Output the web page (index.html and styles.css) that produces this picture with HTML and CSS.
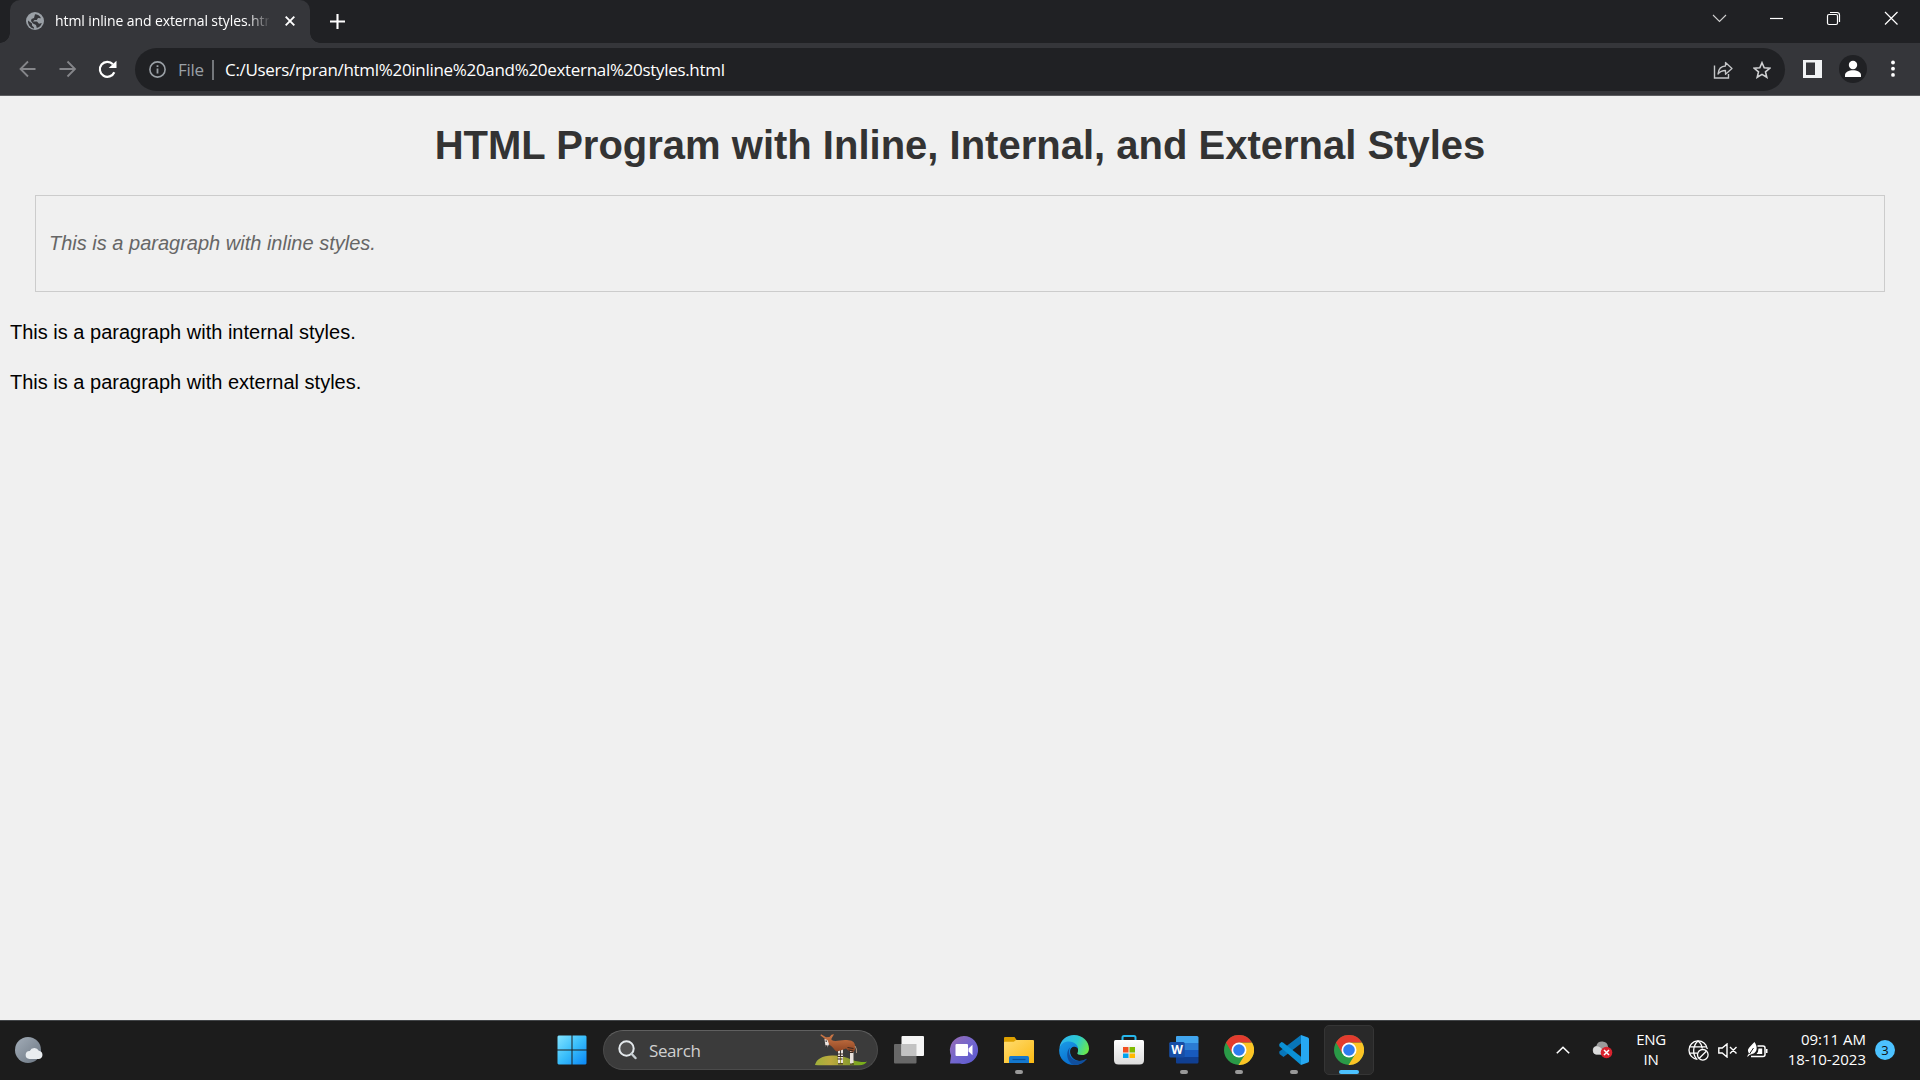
FILE: index.html
```html
<!DOCTYPE html>
<html lang="en">
<head>
<meta charset="utf-8">
<title>html inline and external styles.html</title>
<link rel="stylesheet" href="styles.css">
</head>
<body>
<svg class="defs" aria-hidden="true">
  <defs>
    <linearGradient id="win" x1="0" y1="0" x2="1" y2="1"><stop offset="0" stop-color="#83e4ff"/><stop offset=".5" stop-color="#38bdfb"/><stop offset="1" stop-color="#0a86f5"/></linearGradient>
    <linearGradient id="moon" x1="0" y1="0" x2="1" y2="1"><stop offset="0" stop-color="#a3adb8"/><stop offset="1" stop-color="#6b7682"/></linearGradient>
    <linearGradient id="chat" x1="0" y1="0" x2="1" y2="1"><stop offset="0" stop-color="#9a6bb0"/><stop offset=".5" stop-color="#7367ce"/><stop offset="1" stop-color="#5a57cf"/></linearGradient>
    <linearGradient id="folder" x1="0" y1="0" x2="1" y2="1"><stop offset="0" stop-color="#ffdc70"/><stop offset="1" stop-color="#fbb912"/></linearGradient>
    <linearGradient id="edgeTop" x1="0" y1=".3" x2="1" y2=".6"><stop offset="0" stop-color="#2fb4f0"/><stop offset=".55" stop-color="#2cc9d0"/><stop offset="1" stop-color="#6be84a"/></linearGradient>
    <linearGradient id="edgeLow" x1="0" y1="0" x2=".6" y2="1"><stop offset="0" stop-color="#1b9ce6"/><stop offset="1" stop-color="#0669cc"/></linearGradient>
    <linearGradient id="hill" x1="0" y1="0" x2="1" y2="0"><stop offset="0" stop-color="#9fb03a"/><stop offset=".3" stop-color="#bda93e"/><stop offset=".65" stop-color="#8c9c2f"/><stop offset="1" stop-color="#74b414"/></linearGradient>
    <linearGradient id="coat" x1="0" y1="0" x2="0" y2="1"><stop offset="0" stop-color="#cf7a48"/><stop offset="1" stop-color="#8c4322"/></linearGradient>
    <linearGradient id="bag" x1="0" y1="0" x2="0" y2="1"><stop offset="0" stop-color="#fff"/><stop offset="1" stop-color="#dcdcdc"/></linearGradient>
    <symbol id="chrome" viewBox="0 0 30 30">
      <circle cx="15" cy="15" r="15" fill="#2a9a47"/>
      <path d="M15 7.500H28A15 15 0 0 1 14.500 30L21.500 18.750Z" fill="#fcc425"/>
      <path d="M2 7.500A15 15 0 0 1 28 7.500H15L8.500 18.750Z" fill="#e33b2e"/>
      <circle cx="15" cy="15" r="7.500" fill="#fff"/>
      <circle cx="15" cy="15" r="5.800" fill="#2f7df0"/>
    </symbol>
  </defs>
</svg>

<header class="browser">
  <div class="tabstrip">
    <div class="tab">
      <svg class="favicon" viewBox="0 0 18 18"><circle cx="9" cy="9" r="9" fill="#9aa0a6"/><path d="M2 8.500l4 3v2l2 2v1.200A7.200 7.200 0 0 1 2 8.500zM9 2.200c2.500 0 5 1.500 6 4l-3-.2-1.200 2H8.500L7 9.500h4l2 2.200 2.800-.7a7 7 0 0 1-5 5L10 13l-3-1.500L5 9l.5-2L8 6z" fill="#35363a"/></svg>
      <span class="tab-title">html inline and external styles.html</span>
      <svg class="tab-close" viewBox="0 0 10 10"><path d="M.7.7l8.600 8.600M9.300.7L.7 9.300" stroke="#fff" stroke-width="1.900"/></svg>
    </div>
    <svg class="new-tab" viewBox="0 0 15 15"><path d="M7.500 0v15M0 7.500h15" stroke="#fff" stroke-width="2.100"/></svg>
    <div class="window-buttons">
      <svg viewBox="0 0 57 38"><path d="M22 15l6.500 6.500L35 15" fill="none" stroke="#d0d0d0" stroke-width="1.100"/></svg>
      <svg viewBox="0 0 57 38"><path d="M22 18.500h13" stroke="#fff" stroke-width="1.200"/></svg>
      <svg viewBox="0 0 57 38"><rect x="22.500" y="14.500" width="10" height="10" rx="1.500" fill="none" stroke="#fff" stroke-width="1.200"/><path d="M25 12.500h7q2.500 0 2.500 2.500v7" fill="none" stroke="#fff" stroke-width="1.200"/></svg>
      <svg viewBox="0 0 57 38"><path d="M23 12l12.500 12.500M35.500 12L23 24.500" stroke="#fff" stroke-width="1.200"/></svg>
    </div>
  </div>

  <div class="toolbar">
    <svg class="nav" viewBox="0 0 40 40"><path d="M35.500 20H21M28 12.500L20.500 20l7.500 7.500" fill="none" stroke="#85868a" stroke-width="1.800"/></svg>
    <svg class="nav" viewBox="0 0 40 40"><path d="M19.500 20H34M27.500 12.500L35 20l-7.500 7.500" fill="none" stroke="#85868a" stroke-width="1.800"/></svg>
    <svg class="nav" viewBox="0 0 40 40"><path d="M34.300 23.200A7.500 7.500 0 1 1 32.900 15.200" fill="none" stroke="#fff" stroke-width="2.200"/><path d="M36.500 11.700V19h-7.800z" fill="#fff"/></svg>
    <div class="omnibox">
      <svg class="info" viewBox="0 0 17 17"><circle cx="8.500" cy="8.500" r="7.600" fill="none" stroke="#9aa0a6" stroke-width="1.600"/><path d="M8.500 7.500v5M8.500 4.200v1.900" stroke="#9aa0a6" stroke-width="1.800"/></svg>
      <span class="scheme">File</span>
      <span class="divider"></span>
      <span class="url">C:/Users/rpran/html%20inline%20and%20external%20styles.html</span>
      <svg class="share" viewBox="0 0 20 18"><path d="M1.500 4.500V17h14v-4" fill="none" stroke="#c4c5c7" stroke-width="1.400"/><path d="M5 13C5.500 8 8 5.200 12.500 5V1.500L19 7.500l-6.500 5.700V9.500C9 9.500 7 10.500 5 13z" fill="none" stroke="#c4c5c7" stroke-width="1.300" stroke-linejoin="round"/></svg>
      <svg class="star" viewBox="0 0 18 18"><path d="M9 1.700l2.200 5.100 5.500.5-4.200 3.600 1.300 5.400L9 13.400l-4.800 2.900 1.300-5.400-4.200-3.600 5.500-.5z" fill="none" stroke="#d0d1d3" stroke-width="1.600"/></svg>
    </div>
    <svg class="panel" viewBox="0 0 19 18"><path fill-rule="evenodd" d="M0 0h19v18H0zM3 2.500v12.500h9V2.500z" fill="#f1f3f4"/></svg>
    <svg class="profile" viewBox="0 0 28 28"><circle cx="14" cy="14" r="14" fill="#202124"/><circle cx="14" cy="10" r="4.200" fill="#fff"/><path d="M6 22v-2c0-3 4-4.800 8-4.800s8 1.800 8 4.800v2z" fill="#fff"/></svg>
    <svg class="kebab" viewBox="0 0 4 18"><circle cx="2" cy="2.500" r="1.900" fill="#fff"/><circle cx="2" cy="8.700" r="1.900" fill="#fff"/><circle cx="2" cy="14.900" r="1.900" fill="#fff"/></svg>
  </div>
</header>

<main class="page">
  <h1>HTML Program with Inline, Internal, and External Styles</h1>
  <div class="box"><p class="inline-text">This is a paragraph with inline styles.</p></div>
  <p>This is a paragraph with internal styles.</p>
  <p>This is a paragraph with external styles.</p>
</main>

<footer class="taskbar">
  <svg class="weather" viewBox="0 0 30 30"><circle cx="14" cy="14" r="13" fill="url(#moon)"/><path d="M15.500 23a4 4 0 0 1 .3-8 5 5 0 0 1 9-.3A4.200 4.200 0 0 1 25 23z" fill="#e9edf0"/></svg>
  <div class="apps">
    <div class="app"><svg viewBox="0 0 30 30"><path d="M1.500.5h13v14H.5v-13zM15.500.5h13l1 1v13h-14zM.5 15.500h14v14h-13l-1-1zM15.500 15.500h14v13l-1 1h-13z" fill="url(#win)"/></svg></div>
    <div class="search">
      <svg class="glass" viewBox="0 0 19 20"><circle cx="8.500" cy="8.500" r="7.200" fill="#505050" stroke="#e4e9ec" stroke-width="2"/><path d="M13.500 13.700l4 4.300" stroke="#c6cdd1" stroke-width="2.400" stroke-linecap="round"/></svg>
      <span>Search</span>
      <svg class="okapi" viewBox="0 0 54 34">
        <path d="M1 32Q3 23 18 22.500Q29 22 38 27Q49 30 53 28.500Q51 32 45 32.300H4Z" fill="url(#hill)"/>
        <path d="M25 16v14.500M28 16v14M37 15v16M38.500 16v14" stroke="#e9e2dc" stroke-width="2"/>
        <path d="M10.500 5.500L6.500 2.500 7 1.300 12 4.300 15.500 4 17.500 1.800 20 1.200 17.500 5.500 17.500 7C21 9 26 7 31 7c5 0 9 .5 10 5 .5 3 .2 5-1.500 7L35 18l-3-2.500-4 1.500-5 1.500C20.500 18 19.500 14 15.500 12l-3-1z" fill="url(#coat)"/>
        <path d="M10.500 6l3 1 1.500 4-1.500 3.200-2-.7z" fill="#ece5e1"/><path d="M11.300 12l2.700.7-1 1.800-1.500-.3zM11.500 7.500h1.500v1.200h-1.500z" fill="#363030"/>
        <path d="M41 13q2 2.500 1.500 7" stroke="#b9a08a" stroke-width=".9" fill="none"/>
        <path d="M23.500 21h5.500M23.500 23.500h5.500M23.500 26h5M24 30.800h5M33.500 14.500l6 1M34.500 17l5 1M35.500 19.500h4M36 31h4" stroke="#38261d" stroke-width="1"/>
      </svg>
    </div>
    <div class="app"><svg viewBox="0 0 30 30"><rect y="9" width="22.500" height="19.500" rx="1" fill="#686868"/><rect x="7.500" y="1" width="22.500" height="20" rx="1" fill="#f5f5f5"/><path d="M7.500 9h15v12h-15z" fill="#c2c2c2"/></svg></div>
    <div class="app"><svg viewBox="0 0 30 30"><path d="M15 1a14 14 0 1 1-4 27.400L1 28.500l1-8A14 14 0 0 1 15 1z" fill="url(#chat)"/><rect x="6.500" y="9" width="12.500" height="12" rx="1" fill="#fff"/><path d="M19.500 13.500l4-3.800v10.600l-4-3.800z" fill="#fff"/></svg></div>
    <div class="app running"><svg viewBox="0 0 30 30"><path d="M0 3q0-1 1-1h9.500l2.500 3.500V10H0z" fill="#dda000"/><path d="M0 7.500q0-.8.800-.8h9L12 5h17q1 0 1 1v22H0z" fill="url(#folder)"/><path d="M5 28v-5.500q0-1.500 1.500-1.500h17q1.500 0 1.500 1.500V28z" fill="#1478ce"/><path d="M8.500 24.500h13" stroke="#08519b" stroke-width="1.200"/></svg></div>
    <div class="app"><svg viewBox="0 0 30 30"><path d="M.5 12.500C1.500 5 7.500 0 15 0c9 0 15 6.500 15 13.500 0 4.500-3.500 7-7.500 6.500-3 0-4.300-1-4.300-2 0-.7 1-1.500.8-3.500C18.500 10 12 6 .5 12.500z" fill="url(#edgeTop)"/><path d="M.2 14.500C1 9 5 6.500 10 6.500c6 0 9.500 4.500 9 8-1-3-7-4.500-7.500 2C11 22 16 26 21 26q3 0 6-1.800C24 28 20 30 15 30 6 30-.5 23 .2 14.500z" fill="url(#edgeLow)"/><path d="M11 12.500c-3 6 1 13 8.500 13.500q4 .2 7.500-2 1.500-.8.5.5Q23 30 15.500 30C9 29 5.500 18 11 12.500z" fill="#104f9e"/><path d="M19 14.500c-1-4.500-8-3.500-7.800 2 .1 2 .8 3.800 2 5.300C13.500 18.500 15.500 19 18.500 18c-.5-1 .8-1.500.5-3.500z" fill="#1c1c1c"/></svg></div>
    <div class="app"><svg viewBox="0 0 30 30"><path d="M8.500 6V2.500q0-1.500 1.500-1.500h10q1.500 0 1.500 1.500V6" fill="none" stroke="#27b8ed" stroke-width="2"/><path d="M0 6.500q0-1.500 1.500-1.500h27q1.500 0 1.500 1.500V25q0 4.500-4.500 4.500h-21Q0 29.500 0 25z" fill="url(#bag)"/><path d="M9 12h5.500v5.500H9z" fill="#f15022"/><path d="M15.500 12H21v5.500h-5.500z" fill="#7fba00"/><path d="M9 18.500h5.500V23H9z" fill="#00a3ee"/><path d="M15.500 18.500H21V23h-5.500z" fill="#ffb901"/></svg></div>
    <div class="app running"><div class="word"><svg viewBox="0 0 30 30"><path d="M7 2q0-1 1-1h20q1.500 0 1.500 1.500V8H7z" fill="#41a5ee"/><path d="M7 8h22.500v7H7z" fill="#2b7cd3"/><path d="M7 15h22.500v7H7z" fill="#185abd"/><path d="M7 22h22.500v5q0 1.500-1.500 1.500H8q-1 0-1-1z" fill="#103f91"/><rect x=".2" y="7" width="15.500" height="15.500" rx="1.500" fill="#174ea6"/></svg><b>W</b></div></div>
    <div class="app running"><svg><use href="#chrome"/></svg></div>
    <div class="app running"><svg viewBox="0 0 30 30"><path d="M22 0L5 18.500 2.500 20.300.3 18.500v-2L22 0v8.500L4.500 22 .5 19z" fill="#0876b9"/><path d="M2.500 7L.3 9v2.300L22 30v-8.300L4 7.500z" fill="#0b91d5"/><path d="M22 0l7 2.500q1 .5 1 1.500v22q0 1-1 1.500L22 30z" fill="#26a8f2"/></svg></div>
    <div class="app running active"><svg><use href="#chrome"/></svg></div>
  </div>
  <div class="tray">
    <svg class="chevron" viewBox="0 0 14 8"><path d="M.8 7.300L7 1.300l6.200 6" fill="none" stroke="#fff" stroke-width="1.600"/></svg>
    <svg class="cloud" viewBox="0 0 21 18"><path d="M4.500 13.500a4.300 4.300 0 0 1-.2-8.500A6 6 0 0 1 16 5.500v8z" fill="#9b9b9b"/><path d="M4 13.500a4.300 4.300 0 0 1 .5-8.300q4 0 6 3.500v4.800z" fill="#dadada"/><circle cx="14.500" cy="11.500" r="5.800" fill="#d8232e"/><path d="M12 9l5 5M17 9l-5 5" stroke="#fff" stroke-width="1.500"/></svg>
    <div class="language">ENG<br>IN</div>
    <svg class="globe" viewBox="0 0 21 21"><g fill="none" stroke="#fff" stroke-width="1.300"><path d="M9.500 19.300A9.200 9.200 0 1 1 19.300 9"/><path d="M8.500 19C4.500 14 4.500 6 10 1c3 2.200 4 5 4.200 7.500M1.500 6.800h17M1.500 13.200H9"/><circle cx="14.800" cy="14.800" r="5.300"/><path d="M11.300 18.300l7-7"/></g></svg>
    <svg class="speaker" viewBox="0 0 20 15"><path d="M.8 5v5h3.400L9 14V1L4.200 5zM12 4l6.500 6.500M18.500 4L12 10.500" fill="none" stroke="#fff" stroke-width="1.400"/></svg>
    <svg class="battery" viewBox="0 0 21 17"><path d="M10.500 4h5.500q2 0 2 2v6.500q0 2-2 2H4" fill="none" stroke="#fff" stroke-width="1.500"/><path d="M11.500 6.500h3.700v5.500H9.500q2-2 2-5.500z" fill="#fff"/><path d="M19 7h1.500v4H19z" fill="#fff"/><path d="M2 11.500C-1 7 3 5 7.500 0c3 4 3.500 10.500-2.500 12L2.500 13 1 14.500H0z" fill="#fff"/><path d="M2.500 12L6.500 6" stroke="#1c1c1c"/></svg>
    <div class="clock">09:11 AM<br>18-10-2023</div>
    <div class="badge">3</div>
  </div>
</footer>
</body>
</html>
```
FILE: styles.css
```css
* { box-sizing: border-box; }
body {
  margin: 0;
  width: 1920px;
  height: 1080px;
  display: flex;
  flex-direction: column;
  overflow: hidden;
  background: #f0f0f0;
  font-family: "Open Sans", "Noto Sans", sans-serif;
}
svg { display: block; flex: none; }
.defs { position: absolute; width: 0; height: 0; }

/* Browser frame */
.browser { flex: none; height: 96px; background: #35363a; border-bottom: 1px solid #5c5d60; }
.tabstrip { height: 43px; background: #202124; display: flex; padding-left: 10px; }
.tab {
  position: relative;
  width: 300px;
  height: 43px;
  display: flex;
  align-items: center;
  padding: 0 15px 1px 16px;
  background: #35363a;
  border-radius: 10px 10px 0 0;
}
.tab::before, .tab::after {
  content: "";
  position: absolute;
  bottom: 0;
  width: 10px;
  height: 10px;
}
.tab::before { left: -10px; background: radial-gradient(circle at 0 0, transparent 9.5px, #35363a 10px); }
.tab::after { right: -10px; background: radial-gradient(circle at 100% 0, transparent 9.5px, #35363a 10px); }
.favicon { width: 18px; height: 18px; }
.tab-title {
  width: 214px;
  margin-left: 11px;
  padding-bottom: 1px;
  overflow: hidden;
  white-space: nowrap;
  color: #fff;
  font-size: 14px;
  letter-spacing: -.1px;
  -webkit-mask-image: linear-gradient(90deg, #000 192px, transparent 216px);
  mask-image: linear-gradient(90deg, #000 192px, transparent 216px);
}
.tab-close { width: 10px; height: 10px; margin-left: auto; }
.new-tab { width: 15px; height: 15px; margin: 14px 0 0 20px; }
.window-buttons { display: flex; margin-left: auto; padding-right: 1px; }
.window-buttons svg { width: 57px; height: 38px; }

.toolbar { height: 52px; display: flex; align-items: center; }
.nav { width: 40px; height: 40px; }
.omnibox {
  width: 1650px;
  height: 43px;
  margin: 1px 0 0 15px;
  padding: 0 14px;
  display: flex;
  align-items: center;
  border-radius: 22px;
  background: #202124;
  white-space: nowrap;
}
.info { width: 17px; height: 17px; }
.scheme { width: 26px; margin-left: 12px; padding-bottom: 1px; color: #9aa0a6; font-size: 17px; letter-spacing: -.3px; }
.divider { width: 2px; height: 20px; margin: 0 11px 0 8px; background: #74777b; }
.url { padding-bottom: 1px; color: #fff; font-size: 17px; letter-spacing: -.31px; }
.share { width: 20px; height: 18px; margin-left: auto; }
.star { width: 18px; height: 18px; margin-left: 20px; }
.panel { width: 19px; height: 18px; margin-left: 18px; }
.profile { width: 28px; height: 28px; margin-left: 17px; }
.kebab { width: 4px; height: 18px; margin-left: 24px; }

/* Document */
.page {
  flex: 1;
  padding: 0 10px;
  color: #000;
  font-family: "Liberation Sans", Arial, sans-serif;
  font-size: 20px;
  line-height: 25px;
}
.page h1 {
  margin: 25px 0 26px;
  color: #333;
  text-align: center;
  font-size: 40px;
  line-height: 48px;
}
.page p { margin: 0 0 25px; }
.page .box { margin: 0 25px 28px; height: 97px; padding: 35px 13px; border: 1px solid #ccc; }
.page .inline-text { color: #666; font-style: italic; }

/* Taskbar */
.taskbar {
  flex: none;
  height: 60px;
  display: grid;
  grid-template-columns: 544.5px 832.5px 1fr;
  align-items: start;
  background: #1c1c1c;
  border-top: 1px solid #424548;
  color: #fff;
}
.weather { width: 30px; height: 30px; margin: 15px 0 0 14px; }
.apps { display: flex; align-items: center; height: 58px; }
.app { position: relative; width: 55px; height: 50px; display: grid; place-items: center; }
.app svg { width: 30px; height: 30px; }
.running::after {
  content: "";
  position: absolute;
  left: 23.5px;
  bottom: 1px;
  width: 8px;
  height: 4px;
  border-radius: 2px;
  background: #999;
}
.active { width: 50px; margin-left: 2.5px; border: 1px solid #353535; border-radius: 5px; background: #292929; }
.active::after { left: 14px; bottom: 0; width: 20px; background: #4cc2ff; }
.word { display: grid; place-items: center start; }
.word svg, .word b { grid-area: 1 / 1; }
.word b { width: 16px; text-align: center; font-size: 12px; line-height: 14px; }
.search {
  width: 275px;
  height: 40px;
  margin: 0 3.5px;
  padding: 0 9px 0 14px;
  display: flex;
  align-items: center;
  border: 1px solid #4b4b4b;
  border-top-color: #606060;
  border-radius: 20px;
  background: #3b3b3b;
  color: #d0d0d0;
  font-size: 17px;
}
.glass { width: 19px; height: 20px; margin-right: 12px; }
.search span { letter-spacing: -.4px; }
.okapi { width: 54px; height: 34px; margin-left: auto; }

.tray { display: flex; align-items: center; height: 58px; padding-left: 179px; font-size: 15px; line-height: 20px; white-space: nowrap; }
.chevron { width: 14px; height: 8px; }
.cloud { width: 21px; height: 18px; margin-left: 22px; }
.language { width: 40px; margin: -2px 0 0 18px; text-align: center; letter-spacing: -.3px; }
.globe { width: 21px; height: 21px; margin-left: 17px; }
.speaker { width: 20px; height: 15px; margin-left: 9px; }
.battery { width: 21px; height: 17px; margin-left: 9px; }
.clock { width: 90px; margin: -2px 0 0 8px; text-align: right; letter-spacing: 0; }
.badge { width: 20px; height: 20px; margin-left: 9px; border-radius: 50%; background: #4cc2ff; color: #111; font-size: 13px; text-align: center; }
```
